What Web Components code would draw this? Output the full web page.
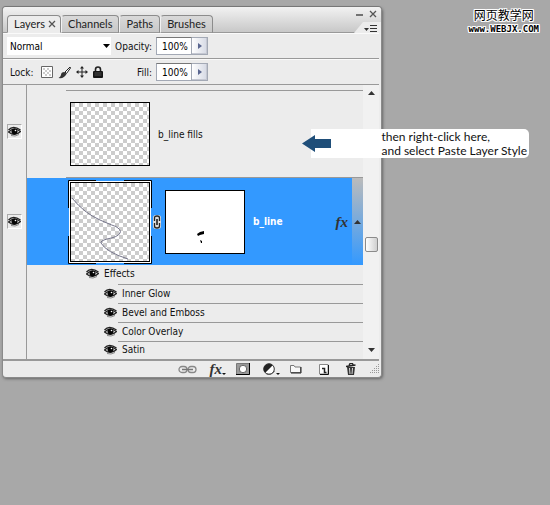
<!DOCTYPE html>
<html lang="en">
<head>
<meta charset="utf-8">
<title>Layers</title>
<style>
body{margin:0;min-height:100vh;background:#a8a8a8;font:10px "DejaVu Sans Condensed","Open Sans",sans-serif;color:#111}
</style>
</head>
<body>
<layers-page></layers-page>
<script>
const define=(name,html,setup)=>customElements.define(name,class extends HTMLElement{
  constructor(){
    super();
    const t=document.createElement('template');
    t.innerHTML=html;
    this.attachShadow({mode:'open'}).append(t.content.cloneNode(true));
  }
  connectedCallback(){if(setup)setup(this,this.shadowRoot)}
});

const ICONS={
  eye:[13,11,'<path d="M.5 4Q5-1 12.5 4" fill="none" stroke="#222" stroke-width="1.3"/><path d="M.5 6Q6 .5 12.5 5.5Q7 11 .5 6Z" fill="#ddd" stroke="#222" stroke-width="1.2"/><circle cx="6.5" cy="5.5" r="3" fill="#050505"/><circle cx="7.5" cy="4.5" r=".8" fill="#fff"/><path d="M3 9.5Q7 11 11 8.5" stroke="#888" fill="none"/>'],
  down:[8,4,'<path d="M0 0H7L3.5 4Z" fill="#000"/>'],
  right:[4,6,'<path d="M0 0L4 3L0 6Z" fill="#5a6690"/>'],
  scrollup:[7,4,'<path d="M0 4L3.5 0L7 4Z" fill="#333"/>'],
  scrolldown:[7,4,'<path d="M0 0H7L3.5 4Z" fill="#333"/>'],
  min:[8,10,'<path d="M0 6H7" stroke="#555" stroke-width="1.6"/>'],
  close:[8,8,'<path d="M1 1L7 7M7 1L1 7" stroke="#555" stroke-width="1.3"/>'],
  menu:[15,8,'<path d="M1 3H6L3.500 6Z" fill="#333"/><path d="M7 .5H14M7 3.500H14M7 6.500H14" stroke="#333"/>'],
  checker:[12,12,'<path d="M.5 .5H11.500V11.500H.5Z" fill="#fff" stroke="#666"/><path d="M2 2H4V4H2ZM6 2H8V4H6ZM4 4H6V6H4ZM8 4H10V6H8ZM2 6H4V8H2ZM6 6H8V8H6ZM4 8H6V10H4ZM8 8H10V10H8Z" fill="#ccc"/>'],
  brush:[13,13,'<path d="M12 1L7 6L8.500 7.500L12.500 2Z" fill="#fff" stroke="#222"/><path d="M6.500 6Q3 6 3 9Q2.500 11 .5 12Q6 13 8.500 8Z" fill="#333"/>'],
  move:[12,12,'<path d="M6 1V11M1 6H11" stroke="#222"/><path d="M6 0L8 2.500H4ZM6 12L4 9.500H8ZM0 6L2.500 4V8ZM12 6L9.500 8V4Z" fill="#222"/>'],
  lock:[10,12,'<path d="M2.500 6V3.500Q2.500 1 5 1T7.500 3.500V6" fill="none" stroke="#222" stroke-width="1.600"/><rect y="5" width="10" height="7" rx="1" fill="#151515"/><path d="M1.500 7H8.500M1.500 9H8.500" stroke="#777" stroke-width=".6"/>'],
  chain:[8,14,'<rect x="0" y="0" width="8" height="14" rx="3" fill="#ddd"/><path d="M1.500 6V3Q1.500 1 4 1T6.500 3V6M1.500 8V11Q1.500 13 4 13T6.500 11V8" fill="none" stroke="#222" stroke-width="1.300"/><path d="M4 4V10" stroke="#111" stroke-width="1.500"/>'],
  link:[19,9,'<g fill="none" stroke="#888" stroke-width="1.300"><rect x="1" y="1.500" width="8" height="6" rx="3"/><rect x="10" y="1.500" width="8" height="6" rx="3"/></g><path d="M4 4.500H15" stroke="#777" stroke-width="1.500"/>'],
  mask:[14,12,'<path d="M.5 .5H13.500V11.500H.5Z" fill="#999" stroke="#777"/><path d="M13.500 0V11.500H0" fill="none" stroke="#000"/><circle cx="7" cy="6" r="3.700" fill="#fff" stroke="#333" stroke-width=".7"/>'],
  adjust:[17,13,'<circle cx="6" cy="6" r="5.300" fill="#fff" stroke="#333"/><path d="M9.750 2.250A5.300 5.300 0 0 0 2.250 9.750Z" fill="#222"/><path d="M3 10.500Q8 13 11.500 8" stroke="#555" fill="none"/><path d="M13 10H17L15 12Z" fill="#111"/>'],
  fx:[4,13,'<path d="M0 10H4L2 12Z" fill="#111"/>'],
  folder:[12,10,'<path d="M.5 1.500H4L5 3H10.500V8.500H.5Z" fill="#f8f8f8" stroke="#777"/><path d="M11 3V9H1" fill="none" stroke="#222"/>'],
  page:[10,11,'<path d="M.5 .5H9V10H.5Z" fill="#fff" stroke="#888"/><path d="M9.500 1V10.500H1" fill="none" stroke="#111"/><path d="M3 4.500H5.500V8.500H7.500" fill="none" stroke="#222" stroke-width="1.500"/>'],
  trash:[10,12,'<path d="M1 4H9L8 12H2Z" fill="#333"/><path d="M3.500 5L4 11M6.500 5L6 11" stroke="#ddd"/><path d="M0 3.500L9.500 2M3 2.500L4 .500H6.500L7 2" fill="none" stroke="#222" stroke-width="1.300"/>'],
  grip:[11,11,'<g fill="#999"><path d="M9 0h1v1h-1zM7 2h1v1h-1zM9 2h1v1h-1zM5 4h1v1h-1zM7 4h1v1h-1zM9 4h1v1h-1zM3 6h1v1h-1zM5 6h1v1h-1zM7 6h1v1h-1zM9 6h1v1h-1zM1 8h1v1h-1zM3 8h1v1h-1zM5 8h1v1h-1zM7 8h1v1h-1zM9 8h1v1h-1z"/></g>'],
  arrow:[30,17,'<path d="M1 8.500L14 0V4H30V13H14V17Z" fill="#1f4e79"/>']
};
define('ps-icon','<style>:host{display:inline-flex;flex:none}svg{display:block}</style><span></span>',(el,r)=>{
  const [w,h,body]=ICONS[el.getAttribute('name')];
  r.querySelector('span').innerHTML=`<svg width="${w}" height="${h}" viewBox="0 0 ${w} ${h}" aria-hidden="true">${body}</svg>`;
});

define('tool-button',`<style>
:host{display:inline-flex;flex:none}
button{display:flex;align-items:center;justify-content:center;width:100%;border:0;padding:0;margin:0;background:none;color:inherit;font:inherit}
</style><button type="button"><slot></slot></button>`,(el,r)=>r.querySelector('button').setAttribute('aria-label',el.getAttribute('label')));

define('fx-mark',`<style>
:host{display:inline-flex;align-items:center;font:italic bold 15px/14px "Liberation Serif",serif;color:#333}
</style><span>fx</span><slot></slot>`);

define('panel-tab',`<style>
:host{display:block}
button{display:flex;align-items:center;gap:3px;height:18px;box-sizing:border-box;border:1px solid #8c8c8c;border-left-color:#f2f2f2;border-bottom-color:#999;border-radius:4px 4px 0 0;padding:0 6px;background:linear-gradient(#d9d9d9,#c8c8c8);font:11px/16px Lato,"Open Sans",sans-serif;color:#222}
:host([active]) button{padding:0 4px 0 6px;background:#ececec;border-bottom-color:#ececec;border-left-color:#8c8c8c}
</style><button type="button" role="tab"><slot></slot></button>`);

define('panel-header',`<style>
:host{display:flex;justify-content:space-between;height:26px;box-sizing:border-box;background:linear-gradient(#f2f2f2,#c8c8c8);border-bottom:1px solid #999;border-radius:3px 3px 0 0}
.tabs{display:flex;align-items:flex-end;padding-left:4px;margin-bottom:-1px}
.side{display:flex;flex-direction:column;align-items:flex-end;justify-content:space-between;margin-bottom:-1px}
.win{display:flex;gap:5px;padding:2px 4px 0 0}
.menu{padding:2px 3px 0 9px;height:9px;background:#ececec;clip-path:polygon(9px 0,100% 0,100% 100%,0 100%)}
</style>
<div class="tabs" role="tablist">
<panel-tab active>Layers <ps-icon name="close"></ps-icon></panel-tab><panel-tab>Channels</panel-tab><panel-tab>Paths</panel-tab><panel-tab>Brushes</panel-tab></div>
<div class="side"><div class="win"><tool-button label="Minimize"><ps-icon name="min"></ps-icon></tool-button><tool-button label="Close"><ps-icon name="close"></ps-icon></tool-button></div>
<tool-button class="menu" label="Panel menu"><ps-icon name="menu"></ps-icon></tool-button></div>`);

define('percent-field',`<style>
:host{display:flex}
label{display:flex;align-items:center;gap:4px}
input{width:36px;height:18px;box-sizing:border-box;border:1px solid #a3a9b5;border-top-color:#777;margin:0;padding:0 0 0 5px;background:#fff;font:inherit;color:#000}
tool-button{width:16px;height:18px;box-sizing:border-box;border:1px solid #a3a9b5;border-left:0;background:linear-gradient(90deg,#fff,#d5d9e4);box-shadow:inset -1px -1px #c5c8d2}
</style><label><span></span><input value="100%"></label><tool-button label="Open slider"><ps-icon name="right"></ps-icon></tool-button>`,(el,r)=>r.querySelector('span').textContent=el.getAttribute('label'));

define('blend-select',`<style>
:host{display:grid;align-items:center;width:104px;background:#fff}
select,ps-icon{grid-area:1/1}
select{appearance:none;width:100%;height:18px;border:0;margin:0;padding:0 0 0 3px;background:#fff;color:#000;font:inherit}
ps-icon{justify-self:end;margin-right:0;pointer-events:none}
</style><select aria-label="Blend mode"><option>Normal</option><option>Multiply</option><option>Screen</option></select><ps-icon name="down"></ps-icon>`);

define('panel-options',`<style>
:host{display:block;padding-right:2px}
.row{display:flex;align-items:center;height:26px;box-sizing:border-box;border-bottom:1px solid #999;border-top:1px solid #fafafa;padding-left:4px}
.field{display:flex;justify-content:flex-end;width:97px}
.lock{display:flex;align-items:center;gap:5px;width:104px}
.lock span{padding:0 2px 0 3px}
</style>
<div class="row"><blend-select></blend-select><percent-field class="field" label="Opacity:"></percent-field></div>
<div class="row"><div class="lock"><span>Lock:</span>
<tool-button label="Lock transparency"><ps-icon name="checker"></ps-icon></tool-button>
<tool-button label="Lock pixels"><ps-icon name="brush"></ps-icon></tool-button>
<tool-button label="Lock position"><ps-icon name="move"></ps-icon></tool-button>
<tool-button label="Lock all"><ps-icon name="lock"></ps-icon></tool-button></div>
<percent-field class="field" label="Fill:"></percent-field></div>`);

define('layer-thumb',`<style>
:host{display:block;flex:none;box-sizing:border-box;width:80px;height:64px;border:1px solid #000;background:#fff}
:host([kind=clear]){background:repeating-conic-gradient(#fff 0 25%,#ccc 0 50%) 0 0/8px 8px}
:host([kind=line]){width:84px;height:84px;border:0;background:none}
svg{display:none}
:host([kind=line]) .line,:host([kind=mask]) .mask{display:block}
</style>
<svg class="line" width="84" height="84"><defs><pattern id="c" width="8" height="8" patternUnits="userSpaceOnUse" x="3" y="3"><path d="M0 0H8V8H0Z" fill="#fff"/><path d="M4 0H8V4H4ZM0 4H4V8H0Z" fill="#ccc"/></pattern></defs>
<path d="M.5 28V.5H28M56 .5H83.500V28M83.500 56V83.500H56M28 83.500H.5V56" fill="none" stroke="#000"/><path d="M1 1H83V83H1Z" fill="#fff"/><path d="M2 2H82V82H2Z" fill="#000"/><path d="M3 3H81V81H3Z" fill="url(#c)"/>
<path d="M4 18Q16 33 32 40T47 46Q54 50 52 53Q50 57 39 59Q32 61 33 63Q38 72 60 79" fill="none" stroke="#77778c"/></svg>
<svg class="mask" width="78" height="62"><path d="M31 43L34 41L38 40V43L34 44L32 45ZM34 49L36 50V52H35Z" fill="#000"/></svg>`);

define('layer-row',`<style>
:host{display:grid;grid-template-columns:24px minmax(0,1fr)}
.eye{display:flex;align-items:center;justify-content:center;border-right:1px solid #999}
.eye tool-button{width:15px;height:15px;box-sizing:border-box;border:1px solid #aaa;border-right-color:#fff;border-bottom-color:#fff}
.body{display:flex;align-items:center;box-sizing:border-box}
:host([selected]) .body{background:#3399ff;color:#fff;font-weight:bold}
</style><div class="eye"><tool-button label="Toggle layer visibility"><ps-icon name="eye"></ps-icon></tool-button></div><div class="body"><slot></slot></div>`);

define('effect-list',`<style>
:host{display:block;margin-left:23px;border-left:1px solid #999}
ul{list-style:none;margin:0;padding:0}
li{display:flex;align-items:center;gap:5px;height:19px;box-sizing:border-box;margin-left:91px;padding-bottom:2px}
li+li{border-top:1px solid #999}
li+li tool-button{margin-left:-14px}
li:first-child{margin-left:59px}
li:nth-child(2){background:none}
li:last-child{height:18px}
</style><ul></ul>`,(el,r)=>{
  r.querySelector('ul').innerHTML=['Effects','Inner Glow','Bevel and Emboss','Color Overlay','Satin'].map(n=>`<li><tool-button label="Toggle ${n}"><ps-icon name="eye"></ps-icon></tool-button><span>${n}</span></li>`).join('');
});

define('layer-scroll',`<style>
:host{display:flex;flex-direction:column;align-items:center;background:#f1f1f1;padding:6px 0 7px;box-sizing:border-box}
.space{flex:143}.rest{flex:96}
.thumb{width:13px;height:15px;box-sizing:border-box;border:1px solid #8b8b8b;border-radius:2px;background:linear-gradient(90deg,#fff,#cfcfcf)}
</style><tool-button label="Scroll up"><ps-icon name="scrollup"></ps-icon></tool-button><div class="space"></div><div class="thumb"></div><div class="rest"></div><tool-button label="Scroll down"><ps-icon name="scrolldown"></ps-icon></tool-button>`);

define('layer-list',`<style>
:host{display:grid;grid-template-columns:minmax(0,1fr) 16px;border-bottom:2px solid #999;margin-right:2px}
.first{height:93px}
.first .in{display:flex;align-items:center;gap:8px;flex:1;align-self:stretch;margin:5px 0 0 39px;padding:0 0 0 4px;border-top:1px solid #999;border-bottom:1px solid #999}
.second{height:87px}
.second>layer-thumb[kind=line]{margin-left:41px}
.second>ps-icon{margin:0 4px 0 1px}
.name{flex:1;margin-left:8px}
.fold{align-self:stretch;width:11px;margin-left:4px;background:linear-gradient(#bbb,#3399ff)}
</style>
<div>
<layer-row class="first"><div class="in"><layer-thumb kind="clear"></layer-thumb><span>b_line fills</span></div></layer-row>
<layer-row class="second" selected><layer-thumb kind="line"></layer-thumb><ps-icon name="chain"></ps-icon><layer-thumb kind="mask"></layer-thumb><span class="name">b_line</span><fx-mark></fx-mark><tool-button class="fold" label="Collapse effects"><ps-icon name="scrollup"></ps-icon></tool-button></layer-row>
<effect-list></effect-list>
</div><layer-scroll></layer-scroll>`);

define('panel-footer',`<style>
:host{display:flex;align-items:center;justify-content:flex-end;height:16px;gap:13px;padding-right:1px}
div{display:flex;align-items:center;gap:10px}
.tail{gap:17px}
</style>
<tool-button label="Link layers"><ps-icon name="link"></ps-icon></tool-button>
<div><tool-button label="Add a layer style"><fx-mark><ps-icon name="fx"></ps-icon></fx-mark></tool-button>
<tool-button label="Add layer mask"><ps-icon name="mask"></ps-icon></tool-button></div>
<div><tool-button label="New adjustment layer"><ps-icon name="adjust"></ps-icon></tool-button>
<div class="tail"><tool-button label="New group"><ps-icon name="folder"></ps-icon></tool-button>
<tool-button label="New layer"><ps-icon name="page"></ps-icon></tool-button>
<tool-button label="Delete layer"><ps-icon name="trash"></ps-icon></tool-button></div></div><ps-icon name="grip"></ps-icon>`);

define('layers-panel',`<style>
:host{display:block;background:#ececec;border:1px solid #8a8a8a;border-top:0;border-radius:4px;box-shadow:0 -1px #777,1px 1px 3px #666}
</style><panel-header></panel-header><panel-options></panel-options><layer-list></layer-list><panel-footer></panel-footer>`);

define('note-callout',`<style>
:host{display:flex;align-items:center;gap:50px;box-sizing:border-box;height:29px;padding-right:2px;background:linear-gradient(#fff,#fff) right/calc(100% - 10px) 100% no-repeat;border-radius:5px;font:12px/14px Lato,sans-serif;color:#111;white-space:nowrap}
</style><ps-icon name="arrow"></ps-icon><div><slot></slot></div>`);

define('site-mark',`<style>
:host{display:flex;flex-direction:column;align-items:center;color:#000;text-shadow:1px 0 #fff,-1px 0 #fff,0 1px #fff,0 -1px #fff,1px 1px #fff,-1px -1px #fff,1px -1px #fff,-1px 1px #fff}
b{font:12px/18px "Noto Sans CJK SC",sans-serif}
small{font:bold 9px/10px "DejaVu Sans Mono",monospace}
</style><b lang="zh">网页教学网</b><small>www.WEBJX.COM</small>`);

define('layers-page',`<style>
:host{display:grid;grid-template-columns:minmax(0,1fr) 168px;position:relative;padding:7px 0 0 2px}
note-callout{position:absolute;top:129px;right:21px}
site-mark{position:absolute;top:6px;right:11px}
</style><layers-panel></layers-panel>
<note-callout>then right-click here,<br>and select Paste Layer Style</note-callout><site-mark></site-mark>`);
</script>
</body>
</html>
